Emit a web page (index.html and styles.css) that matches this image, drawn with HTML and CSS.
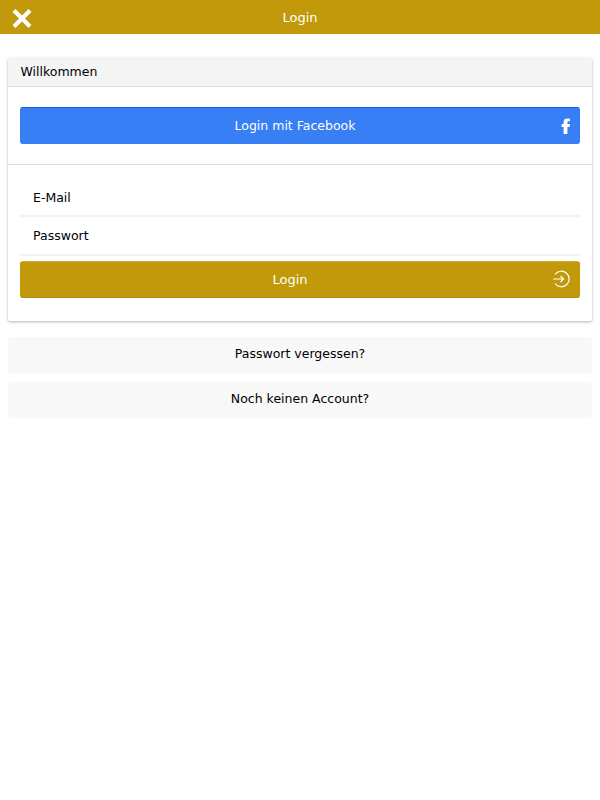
FILE: index.html
```html
<!DOCTYPE html>
<html lang="de">
<head>
  <meta charset="UTF-8" />
  <title>Login</title>
  <meta name="viewport" content="width=device-width, initial-scale=1.0" />
  <link rel="stylesheet" href="styles.css">
</head>
<body>

<header class="topbar">
  <button class="close-btn" aria-label="Close">
    <svg width="22" height="20" viewBox="0 0 22 20"><path d="M3 1.500 L19 17.500 M19 1.500 L3 17.500" stroke="#fff" stroke-width="4.200" fill="none"/></svg>
  </button>
  <h1 class="topbar-title">Login</h1>
</header>

<main class="content">
  <section class="card">
    <div class="card-header">Willkommen</div>

    <div class="card-social">
      <button class="btn btn-facebook">
        <span class="btn-label">Login mit Facebook</span>
        <svg class="btn-icon-fb" width="10" height="16" viewBox="0 0 10 16"><path d="M2.600 16 V9 H0.600 V6 H2.600 V4 C2.600 1.500 4.100 0.500 6.500 0.500 C7.600 0.500 8.500 0.600 9 0.700 V3.200 H7.600 C6.700 3.200 6.400 3.700 6.400 4.500 V6 H9 L8.600 9 H6.400 V16 Z" fill="#fff"/></svg>
      </button>
    </div>

    <form class="card-form">
      <input class="field" type="text" placeholder="E-Mail">
      <input class="field" type="password" placeholder="Passwort">
      <button type="button" class="btn btn-login">
        <span class="btn-label">Login</span>
        <svg class="btn-icon-login" width="18" height="18" viewBox="0 0 18 18"><path d="M3 4.500 A7.800 7.800 0 1 1 3 13.500" stroke="#fff" stroke-width="1.200" fill="none"/><path d="M1 9 H11.500 M8.500 6 L11.500 9 L8.500 12" stroke="#fff" stroke-width="1.200" fill="none"/></svg>
      </button>
    </form>
  </section>

  <a class="link-row" href="#">Passwort vergessen?</a>
  <a class="link-row" href="#">Noch keinen Account?</a>
</main>

</body>
</html>
```

FILE: styles.css
```css
* { margin: 0; padding: 0; box-sizing: border-box; }

body {
  font-family: 'DejaVu Sans', sans-serif;
  font-size: 12.5px;
  background: #fff;
  color: #000;
}

.topbar {
  position: relative;
  height: 34px;
  background: #c1990a;
  display: flex;
  align-items: center;
  justify-content: center;
}

.topbar-title {
  font-size: 13px;
  font-weight: normal;
  color: #fff;
}

.close-btn {
  position: absolute;
  left: 11px;
  top: 9px;
  display: flex;
  background: none;
  border: none;
}

.content {
  padding: 24px 8px 0;
}

.card {
  background: #fff;
  border-radius: 2px;
  box-shadow: 0 1px 3px rgba(0,0,0,0.3);
  padding-bottom: 23px;
  margin-bottom: 16px;
}

.card-header {
  height: 29px;
  padding: 0 12.500px;
  line-height: 28px;
  background: #f4f4f4;
  border-bottom: 1px solid #ddd;
}

.card-social {
  padding: 20px 12px;
  border-bottom: 1px solid #ddd;
}

.card-form {
  padding: 13px 12px 0;
}

.btn {
  position: relative;
  display: flex;
  align-items: center;
  justify-content: center;
  width: 100%;
  height: 37px;
  border-radius: 3px;
  font-family: inherit;
  font-size: 12.5px;
  color: #fff;
}

.btn-facebook {
  background: #387ef5;
  border: 1px solid #387ef5;
  border-top-color: #0c60ee;
  padding-right: 10px;
}

.btn-login {
  background: #c1990a;
  border: 1px solid #c1990a;
  border-top-color: #cdaa35;
  border-bottom-color: #ae8a09;
  margin-top: 5px;
  padding-right: 20px;
}

.btn-login .btn-label {
  font-size: 13px;
}

.btn-icon-fb {
  position: absolute;
  right: 8px;
  top: 10px;
}

.btn-icon-login {
  position: absolute;
  right: 9px;
  top: 8px;
}

.field {
  display: block;
  width: 100%;
  height: 39px;
  padding: 0 13px;
  border: none;
  border-bottom: 2px solid #f2f2f2;
  outline: none;
  font-family: inherit;
  font-size: 12.5px;
  background: #fff;
}

.field:first-child {
  padding-top: 1px;
}

.field::placeholder {
  color: #000;
  opacity: 1;
}

.link-row {
  display: block;
  height: 36.500px;
  margin-bottom: 8px;
  line-height: 34px;
  text-align: center;
  background: #f8f8f8;
  border-radius: 3px;
  color: #000;
  text-decoration: none;
}
```
